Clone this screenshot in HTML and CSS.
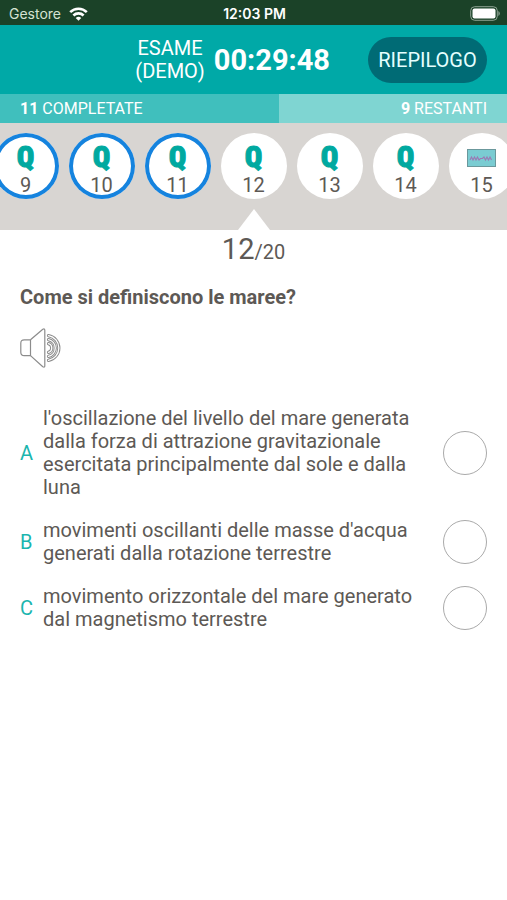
FILE: index.html
```html
<!doctype html>
<html lang="it">
<head>
    <meta charset="UTF-8">
    <meta name="viewport" content="width=device-width, initial-scale=1.0">
    <title>Esame (demo)</title>
    <link rel="stylesheet" href="styles.css">
</head>
<body>
    <!-- status bar -->
    <div class="status">
        <div class="carrier">
            <span>Gestore</span>
            <svg width="19" height="14" viewBox="0 0 19 14" fill="none" stroke="#fff" stroke-width="2.6">
                <path d="M1.2 5.2a11.8 11.8 0 0 1 16.6 0"/>
                <path d="M4.4 8.5a7.3 7.3 0 0 1 10.2 0"/>
                <path d="M9.5 13.8L6.7 11a4 4 0 0 1 5.6 0z" fill="#fff" stroke="none"/>
            </svg>
        </div>
        <div class="clock">12:03 PM</div>
        <svg class="battery" width="30" height="15" viewBox="0 0 30 15">
            <rect x=".7" y=".7" width="26.6" height="13.6" rx="4" fill="none" stroke="#8da292"/>
            <rect x="2.5" y="2.5" width="23" height="10" rx="2" fill="#fff"/>
            <path d="M28.4 5v5q1.4-.8 1.4-2.5T28.4 5z" fill="#8da292"/>
        </svg>
    </div>

    <!-- header -->
    <header class="header">
        <h1 class="title">ESAME<br>(DEMO)</h1>
        <div class="timer">00:29:48</div>
        <button type="button" class="summary">RIEPILOGO</button>
    </header>

    <!-- progress -->
    <div class="progress">
        <div class="done" style="width: 55%"><b>11</b> COMPLETATE</div>
        <div class="left"><b>9</b> RESTANTI</div>
    </div>

    <!-- question list -->
    <nav class="strip">
        <a href="#" class="item answered"><span class="q">Q</span><span class="num">9</span></a>
        <a href="#" class="item answered"><span class="q">Q</span><span class="num">10</span></a>
        <a href="#" class="item answered"><span class="q">Q</span><span class="num">11</span></a>
        <a href="#" class="item current"><span class="q">Q</span><span class="num">12</span></a>
        <a href="#" class="item"><span class="q">Q</span><span class="num">13</span></a>
        <a href="#" class="item"><span class="q">Q</span><span class="num">14</span></a>
        <a href="#" class="item">
            <span class="q">
                <svg width="29" height="18" viewBox="0 0 29 18" fill="none">
                    <rect x=".5" y=".5" width="28" height="17" fill="#7accd2" stroke="#6b989c"/>
                    <path d="M3 11l1.5-3 1.500 3 1.500-3 1.500 3 1.500-3 1.500 3 1.500-1.500h2l1.500-1.500 1.500 3 1.500-3 1.500 3 1.500-3 1.500 3" stroke="#9b78b4" stroke-width="1.1"/>
                </svg>
            </span>
            <span class="num">15</span>
        </a>
    </nav>

    <!-- question -->
    <main class="main">
        <p class="counter"><span class="now">12</span>/20</p>
        <h2 class="question">Come si definiscono le maree?</h2>
        <button type="button" class="audio" aria-label="Ascolta">
            <svg width="41" height="40" viewBox="0 0 41 40" fill="none" stroke="#8c8c8c" stroke-width="1.2" stroke-linejoin="round">
                <path d="M10.5 11.8H4.2Q.8 11.8.8 15.2v9Q.8 27.6 4.2 27.6h6.3z"/>
                <path d="M10.5 11.8L22.8 1.2q2-1 2 1v35.6q0 2-2 1L10.5 27.6"/>
                <!-- sound waves: grey band with a white core -->
                <g stroke-width="3.2" stroke-linecap="round">
                    <path d="M28.5 15.6a4.6 4.6 0 0 1 0 8.8"/>
                    <path d="M28.5 11.6a8.6 8.6 0 0 1 0 16.8"/>
                    <path d="M28.5 7.6a12.6 12.6 0 0 1 0 24.8"/>
                </g>
                <g stroke="#fff" stroke-width="1.3" stroke-linecap="round">
                    <path d="M28.5 15.6a4.6 4.6 0 0 1 0 8.8"/>
                    <path d="M28.5 11.6a8.6 8.6 0 0 1 0 16.8"/>
                    <path d="M28.5 7.6a12.6 12.6 0 0 1 0 24.8"/>
                </g>
            </svg>
        </button>
        <form class="answers">
            <label class="answer">
                <span class="letter">A</span>
                <span class="text">l'oscillazione del livello del mare generata dalla forza di attrazione gravitazionale esercitata principalmente dal sole e dalla luna</span>
                <input type="radio" name="answer" value="A">
            </label>
            <label class="answer">
                <span class="letter">B</span>
                <span class="text">movimenti oscillanti delle masse d'acqua generati dalla rotazione terrestre</span>
                <input type="radio" name="answer" value="B">
            </label>
            <label class="answer">
                <span class="letter">C</span>
                <span class="text">movimento orizzontale del mare generato dal magnetismo terrestre</span>
                <input type="radio" name="answer" value="C">
            </label>
        </form>
    </main>
</body>
</html>
```

FILE: styles.css
```css
*{
    box-sizing: border-box;
}
body{
    margin: 0;
    background: #fff;
    color: #5d5955;
    font-family: Roboto, "Liberation Sans", sans-serif;
    font-size: 20px;
    line-height: 23px;
}
h1,h2,p{
    margin: 0;
    font-size: 20px;
    font-weight: 400;
}
button{
    border: 0;
    padding: 0;
    font: inherit;
    cursor: pointer;
}
svg{
    display: block;
}

/* status bar */
.status{
    display: grid;
    grid-template-columns: 1fr auto 1fr;
    align-items: center;
    height: 25px;
    padding: 2px 7px 0 9px;
    background: #1b4228;
    color: #fff;
    font-family: Inter, sans-serif;
    font-size: 14px;
}
.carrier{
    display: flex;
    align-items: center;
    gap: 8px;
    color: #d5e2d2;
}
.clock{
    font-weight: 600;
}
.battery{
    justify-self: end;
}

/* header */
.header{
    display: flex;
    align-items: center;
    justify-content: flex-end;
    height: 69px;
    padding: 1px 20px 0;
    background: #00a9a7;
    color: #fff;
}
.title{
    text-align: center;
}
.timer{
    margin: 0 38px 0 9px;
    font-size: 29px;
    font-weight: 700;
}
.summary{
    width: 119px;
    height: 46px;
    border-radius: 23px;
    background: #006b75;
    color: #e4ffff;
}

/* progress */
.progress{
    display: flex;
    height: 29px;
    background: #7fd5d2;
    color: #fff;
    font-size: 16px;
    line-height: 29px;
}
.done{
    padding-left: 20px;
    background: #40bfbd;
}
.left{
    flex: 1;
    padding-right: 20px;
    text-align: right;
}

/* question list */
.strip{
    display: flex;
    justify-content: center;
    gap: 10px;
    height: 107px;
    padding-top: 10px;
    background: #d8d5d2;
    overflow: hidden;
}
.item{
    position: relative;
    flex: none;
    display: flex;
    flex-direction: column;
    align-items: center;
    width: 66px;
    height: 66px;
    padding-top: 9px;
    border-radius: 50%;
    background: #fff;
    color: inherit;
    text-decoration: none;
}
.answered{
    box-shadow: inset 0 0 0 4px #1583de;
}
.q{
    display: flex;
    align-items: center;
    height: 31px;
    color: #00a9a0;
    font-family: "Roboto Condensed", "Liberation Sans Narrow", Roboto, sans-serif;
    font-size: 29px;
    font-weight: 900;
    -webkit-text-stroke: 1px #00a9a0;
}
.num{
    line-height: 24px;
}
/* pointer under the current question */
.current::after{
    content: "";
    position: absolute;
    top: 76px;
    left: 50%;
    margin-left: -16px;
    border: 16px solid transparent;
    border-top: 0;
    border-bottom: 21px solid #fff;
}

/* question */
.main{
    padding: 3px 20px 20px;
}
.counter{
    line-height: 32px;
    text-align: center;
}
.now{
    font-size: 29px;
}
.question{
    margin-top: 18px;
    font-weight: 700;
}
.audio{
    margin: 19px 0 39px;
    background: none;
}
.answers{
    display: flex;
    flex-direction: column;
    gap: 20px;
}
.answer{
    display: flex;
    align-items: center;
}
.letter{
    flex: none;
    width: 23px;
    color: #1bb5ae;
}
.text{
    flex: 1;
    margin-right: 20px;
}
.answer input{
    appearance: none;
    flex: none;
    width: 44px;
    height: 44px;
    margin: 0;
    border: 1px solid #aaa;
    border-radius: 50%;
}
.answer input:checked{
    background: #00a9a7;
}
```
